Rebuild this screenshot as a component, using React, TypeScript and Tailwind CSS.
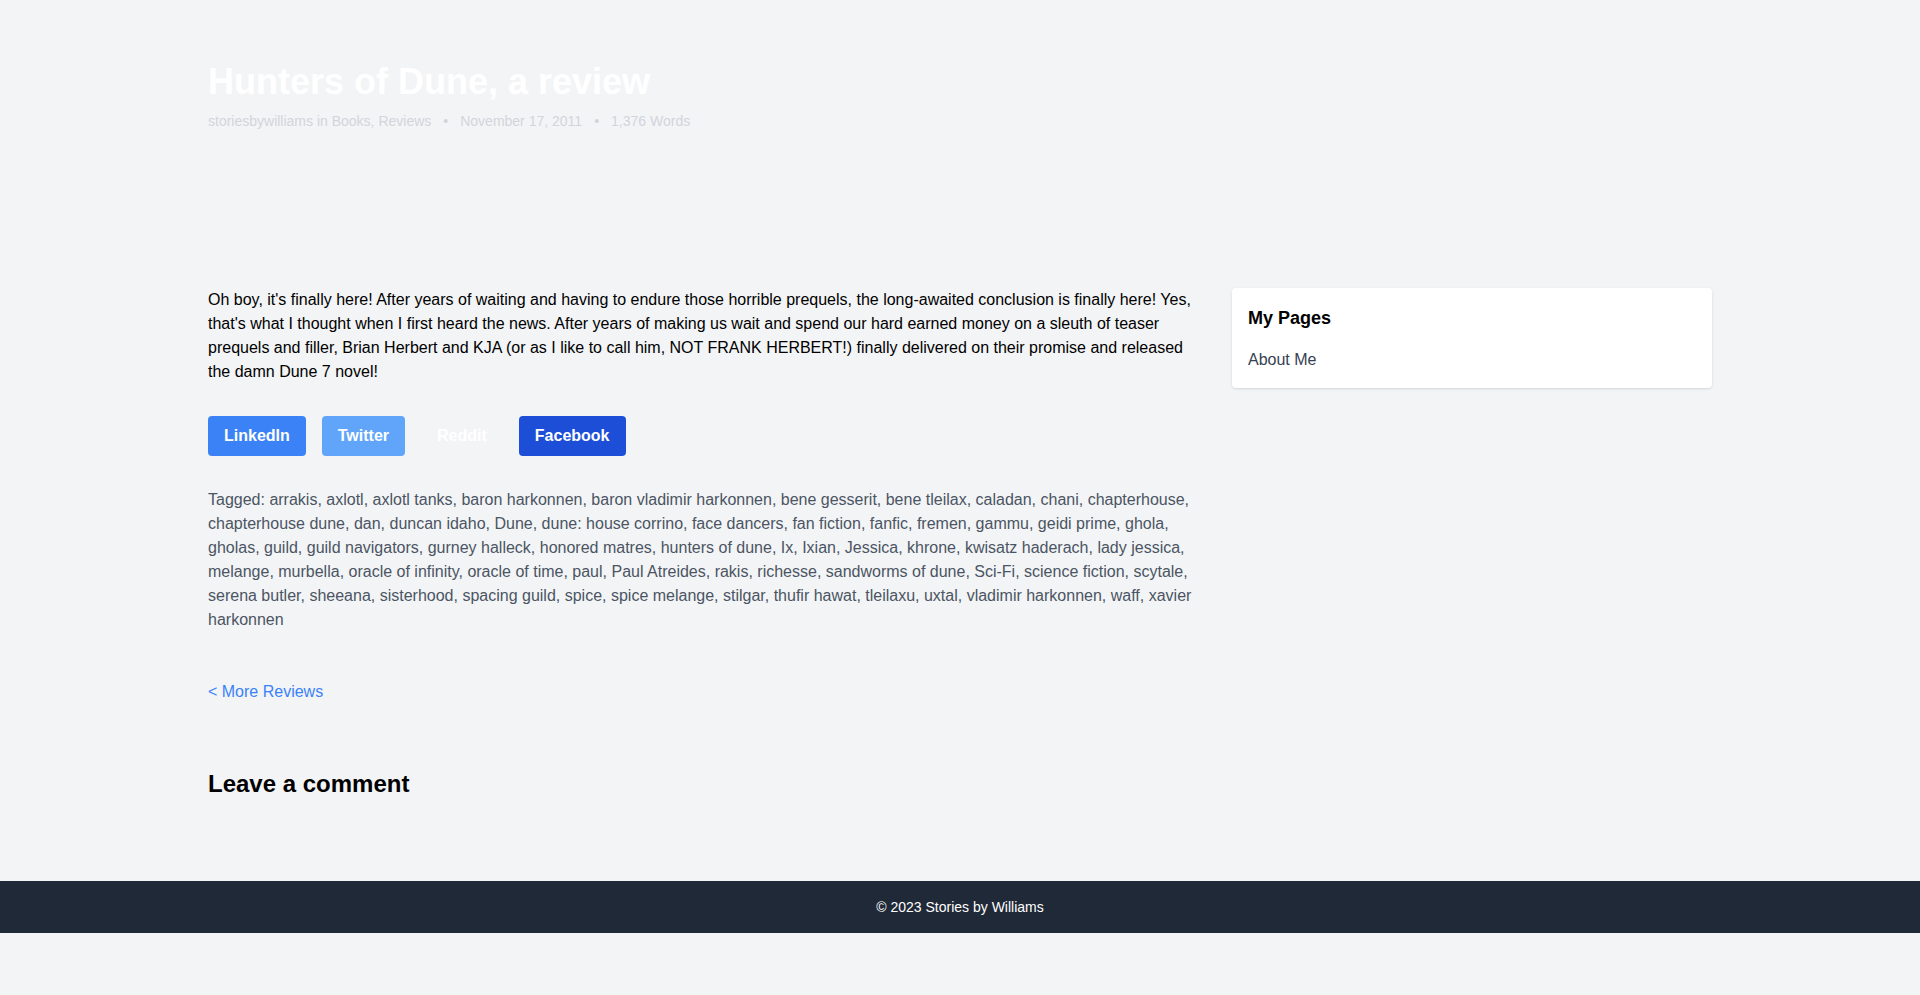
import React from 'react';

const TAGS = [
  'arrakis', 'axlotl', 'axlotl tanks', 'baron harkonnen', 'baron vladimir harkonnen', 'bene gesserit',
  'bene tleilax', 'caladan', 'chani', 'chapterhouse', 'chapterhouse dune', 'dan', 'duncan idaho', 'Dune',
  'dune: house corrino', 'face dancers', 'fan fiction', 'fanfic', 'fremen', 'gammu', 'geidi prime', 'ghola',
  'gholas', 'guild', 'guild navigators', 'gurney halleck', 'honored matres', 'hunters of dune', 'Ix', 'Ixian',
  'Jessica', 'khrone', 'kwisatz haderach', 'lady jessica', 'melange', 'murbella', 'oracle of infinity',
  'oracle of time', 'paul', 'Paul Atreides', 'rakis', 'richesse', 'sandworms of dune', 'Sci-Fi',
  'science fiction', 'scytale', 'serena butler', 'sheeana', 'sisterhood', 'spacing guild', 'spice',
  'spice melange', 'stilgar', 'thufir hawat', 'tleilaxu', 'uxtal', 'vladimir harkonnen', 'waff',
  'xavier harkonnen',
];

const SHARE = [
  { label: 'LinkedIn', cls: 'bg-[#3b82f6]' },
  { label: 'Twitter', cls: 'bg-[#60a5fa]' },
  { label: 'Reddit', cls: 'bg-transparent' },
  { label: 'Facebook', cls: 'bg-[#1d4ed8]' },
];

export default function App() {
  return (
    <div className="min-h-screen bg-[#f3f4f6] font-['Liberation_Sans',Arial,sans-serif]">
      {/* Hero (background image missing, so just the text) */}
      <header className="container mx-auto px-4 pt-[62px] pb-[157px]">
        <h1 className="text-4xl font-bold text-white">Hunters of Dune, a review</h1>
        <div className="mt-[9px] flex items-center text-sm text-[#d1d5db]">
          <span>storiesbywilliams in Books, Reviews</span>
          <span className="mx-3">•</span>
          <span>November 17, 2011</span>
          <span className="mx-3">•</span>
          <span>1,376 Words</span>
        </div>
      </header>

      <main className="container mx-auto px-4 pb-[81px]">
        <div className="grid grid-cols-3 gap-8">
          <article className="col-span-2">
            <p className="text-base text-black">
              Oh boy, it's finally here! After years of waiting and having to endure those horrible prequels, the
              long-awaited conclusion is finally here! Yes, that's what I thought when I first heard the news. After
              years of making us wait and spend our hard earned money on a sleuth of teaser prequels and filler, Brian
              Herbert and KJA (or as I like to call him, NOT FRANK HERBERT!) finally delivered on their promise and
              released the damn Dune 7 novel!
            </p>

            <div className="mt-8 flex gap-4">
              {SHARE.map((s) => (
                <a key={s.label} href="#" className={`${s.cls} rounded px-4 py-2 font-bold text-white`}>
                  {s.label}
                </a>
              ))}
            </div>

            <p className="mt-8 text-[#4b5563]">{`Tagged: ${TAGS.join(', ')}`}</p>

            <a href="#" className="mt-12 inline-block text-[#3b82f6]">&lt; More Reviews</a>

            <h2 className="mt-16 text-2xl font-bold text-black">Leave a comment</h2>
          </article>

          <aside>
            <div className="rounded bg-white p-4 shadow">
              <h3 className="mb-4 text-lg font-bold text-black">My Pages</h3>
              <a href="#" className="block text-[#374151]">About Me</a>
            </div>
          </aside>
        </div>
      </main>

      <footer className="bg-[#1f2937] py-4 text-center text-sm text-white">© 2023 Stories by Williams</footer>
    </div>
  );
}
